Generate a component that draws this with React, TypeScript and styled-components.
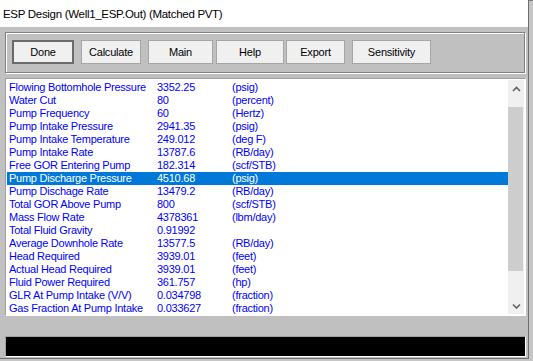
import React from 'react';
import styled, { createGlobalStyle } from 'styled-components';

const GlobalStyle = createGlobalStyle`
  html, body {
    margin: 0;
    padding: 0;
  }
  body {
    width: 533px;
    height: 361px;
    overflow: hidden;
  }
`;

// the desktop / window behind the dialog, only a strip shows on the right
const Desktop = styled.div`
  width: 533px;
  height: 361px;
  background: linear-gradient(#7c7c7c 0 1px, #c6c6c6 1px);
`;

const Window = styled.div`
  width: 528px;
  height: 358px;
  border-right: 1px solid #6e6e6e;
  border-bottom: 1px solid #6e6e6e;
  background: #c0c0c0;
  display: flex;
  flex-direction: column;
  font-family: "Liberation Sans", Arial, sans-serif;
`;

const TitleBar = styled.div`
  height: 27px;
  line-height: 28px;
  padding-left: 3px;
  background: #ffffff;
  color: #000000;
  font-size: 11.5px;
  letter-spacing: -0.3px;
  white-space: nowrap;
`;

const Body = styled.div`
  display: flex;
  flex-direction: column;
  padding: 5px 0 0 5px;
`;

const ButtonPanel = styled.div`
  box-sizing: border-box;
  width: 520px;
  height: 41px;
  display: flex;
  align-items: flex-start;
  padding: 7px 0 0 6px;
  border: 1px solid #808080;
  box-shadow: inset 1px 1px 0 #ffffff, 1px 1px 0 #ffffff;
`;

const Button = styled.button<{ $width: number; $gap: number; $default?: boolean }>`
  box-sizing: border-box;
  width: ${(p) => p.$width}px;
  height: 24px;
  margin: 0 0 0 ${(p) => p.$gap}px;
  padding: 0;
  background: #f0f0f0;
  border: ${(p) => (p.$default ? '2px solid #6a6a6a' : '1px solid #a6a6a6')};
  color: #000000;
  font-family: "Liberation Sans", Arial, sans-serif;
  font-size: 11px;
  letter-spacing: -0.2px;
  cursor: default;
`;

const ListBox = styled.div`
  box-sizing: border-box;
  width: 521px;
  height: 238px;
  margin-top: 5px;
  display: flex;
  background: #ffffff;
  border: 1px solid #ffffff;
  border-top-color: #a0a0a0;
  border-left-color: #a0a0a0;
`;

const Rows = styled.div`
  width: 501px;
  padding: 2px 0 0 1px;
  overflow: hidden;
`;

const Row = styled.div<{ $selected?: boolean }>`
  display: grid;
  grid-template-columns: 148px 75px 1fr;
  height: 13px;
  line-height: 13px;
  padding-left: 2px;
  font-size: 11px;
  letter-spacing: -0.25px;
  white-space: nowrap;
  color: ${(p) => (p.$selected ? '#ffffff' : '#0000ff')};
  background: ${(p) => (p.$selected ? '#0078d7' : 'transparent')};
`;

const ScrollBar = styled.div`
  width: 16px;
  margin: 1px 1px 1px 0;
  display: flex;
  flex-direction: column;
  background: #f0f0f0;
`;

const ArrowBox = styled.div`
  height: 17px;
  display: flex;
  align-items: center;
  justify-content: center;
`;

const Thumb = styled.div`
  height: 164px;
  margin: 10px 1px 0 0;
  background: #cdcdcd;
`;

const Track = styled.div`
  flex: 1;
`;

const StatusBar = styled.div`
  box-sizing: border-box;
  width: 521px;
  height: 21px;
  margin-top: 20px;
  background: #000000;
  border: 1px solid #ffffff;
  border-top-color: #a0a0a0;
  border-left-color: #a0a0a0;
`;

const Chevron: React.FC<{ down?: boolean }> = ({ down }) => (
  <svg width="9" height="6" viewBox="0 0 9 6">
    <polyline
      points={down ? '1,1.5 4.5,5 8,1.5' : '1,5 4.5,1.5 8,5'}
      fill="none"
      stroke="#606060"
      strokeWidth="1.6"
    />
  </svg>
);

const buttons = [
  { label: 'Done', width: 62, gap: 0, isDefault: true },
  { label: 'Calculate', width: 60, gap: 7 },
  { label: 'Main', width: 65, gap: 7 },
  { label: 'Help', width: 68, gap: 3 },
  { label: 'Export', width: 59, gap: 2 },
  { label: 'Sensitivity', width: 79, gap: 7 },
];

const results: [string, string, string][] = [
  ['Flowing Bottomhole Pressure', '3352.25', '(psig)'],
  ['Water Cut', '80', '(percent)'],
  ['Pump Frequency', '60', '(Hertz)'],
  ['Pump Intake Pressure', '2941.35', '(psig)'],
  ['Pump Intake Temperature', '249.012', '(deg F)'],
  ['Pump Intake Rate', '13787.6', '(RB/day)'],
  ['Free GOR Entering Pump', '182.314', '(scf/STB)'],
  ['Pump Discharge Pressure', '4510.68', '(psig)'],
  ['Pump Dischage Rate', '13479.2', '(RB/day)'],
  ['Total GOR Above Pump', '800', '(scf/STB)'],
  ['Mass Flow Rate', '4378361', '(lbm/day)'],
  ['Total Fluid Gravity', '0.91992', ''],
  ['Average Downhole Rate', '13577.5', '(RB/day)'],
  ['Head Required', '3939.01', '(feet)'],
  ['Actual Head Required', '3939.01', '(feet)'],
  ['Fluid Power Required', '361.757', '(hp)'],
  ['GLR At Pump Intake (V/V)', '0.034798', '(fraction)'],
  ['Gas Fraction At Pump Intake', '0.033627', '(fraction)'],
];

const SELECTED = 7;

const App: React.FC = () => {
  return (
    <>
      <GlobalStyle />
      <Desktop>
        <Window>
          <TitleBar>ESP Design (Well1_ESP.Out) (Matched PVT)</TitleBar>
          <Body>
            <ButtonPanel>
              {buttons.map((b) => (
                <Button key={b.label} $width={b.width} $gap={b.gap} $default={b.isDefault}>
                  {b.label}
                </Button>
              ))}
            </ButtonPanel>

            <ListBox>
              <Rows>
                {results.map(([name, value, unit], i) => (
                  <Row key={name} $selected={i === SELECTED}>
                    <span>{name}</span>
                    <span>{value}</span>
                    <span>{unit}</span>
                  </Row>
                ))}
              </Rows>
              <ScrollBar>
                <ArrowBox>
                  <Chevron />
                </ArrowBox>
                <Thumb />
                <Track />
                <ArrowBox>
                  <Chevron down />
                </ArrowBox>
              </ScrollBar>
            </ListBox>

            <StatusBar />
          </Body>
        </Window>
      </Desktop>
    </>
  );
};

export default App;
